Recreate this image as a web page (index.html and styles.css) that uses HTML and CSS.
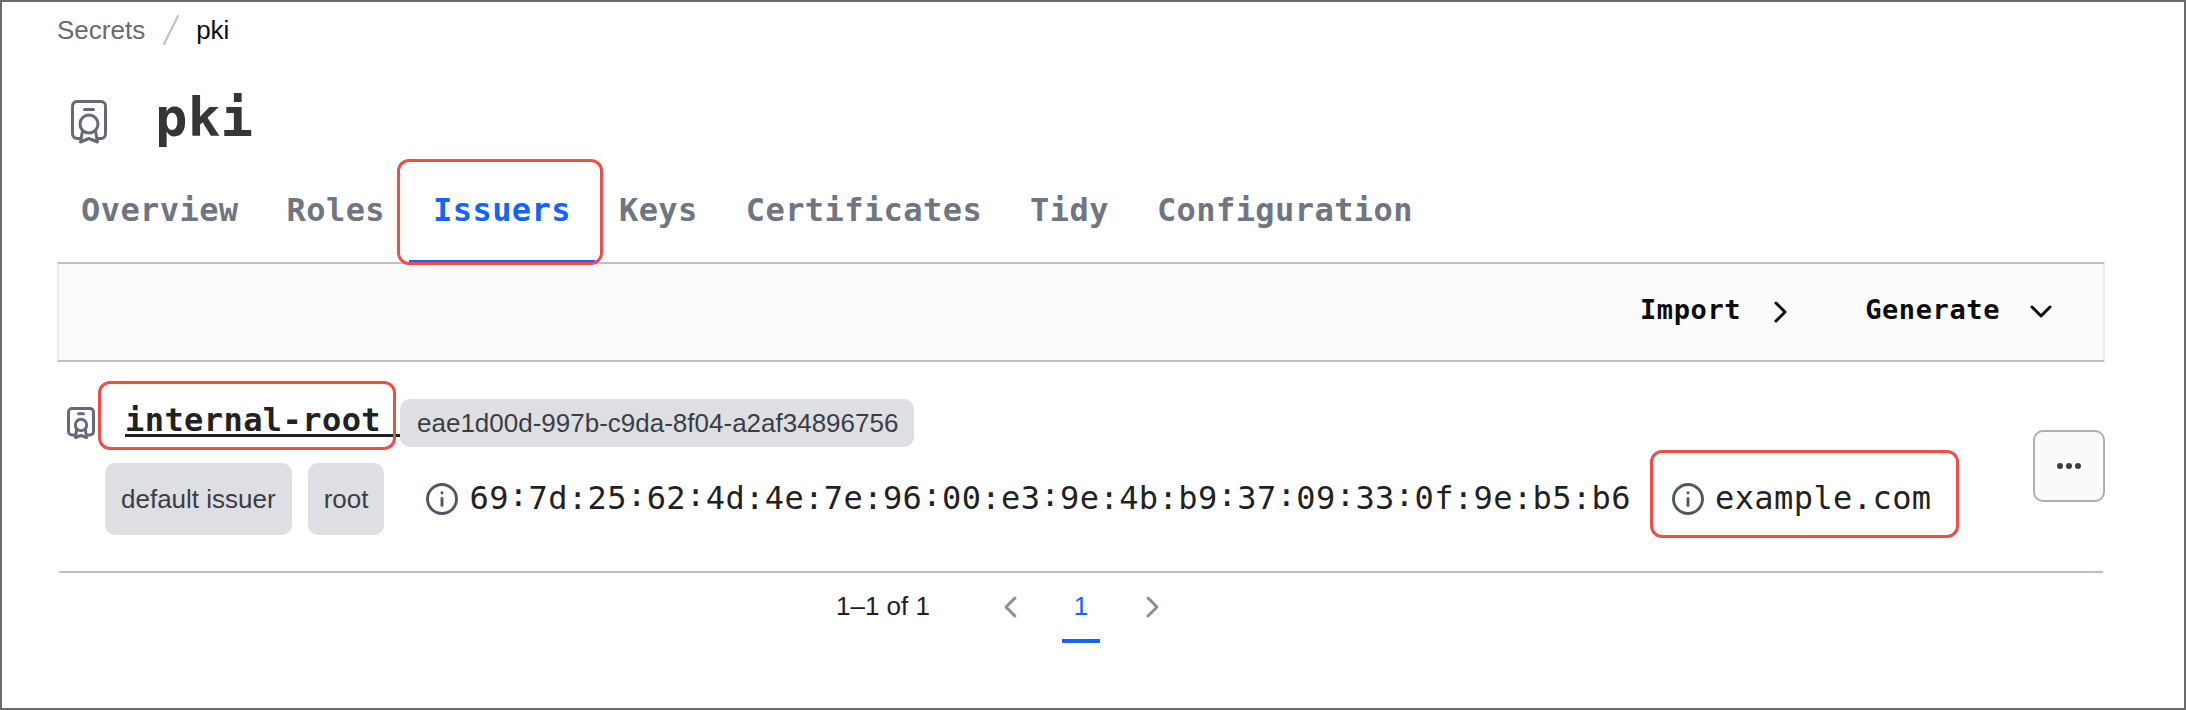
FILE: index.html
```html
<!DOCTYPE html>
<html lang="en">
<head>
<meta charset="utf-8">
<title>pki issuers</title>
<link rel="stylesheet" href="styles.css">
</head>
<body>
<svg class="defs" width="0" height="0">
  <symbol id="cert" viewBox="0 0 36 44">
    <path d="M9 38.500H6a4.500 4.500 0 0 1-4.500-4.500V6A4.500 4.500 0 0 1 6 1.500H30A4.500 4.500 0 0 1 34.500 6V34A4.500 4.500 0 0 1 30 38.500H27M13.500 9.500H22.500"/>
    <circle cx="18" cy="24" r="9"/>
    <path d="M11.500 31L9.500 42L18 38.500L26.500 42L24.500 31"/>
  </symbol>
  <symbol id="cert-small" viewBox="0 0 28 32">
    <path d="M7 28H5a3.500 3.500 0 0 1-3.500-3.500V5A3.500 3.500 0 0 1 5 1.500H23A3.500 3.500 0 0 1 26.500 5V24.500A3.500 3.500 0 0 1 23 28H21M11.500 6.700H16.500"/>
    <circle cx="14" cy="18" r="5.700"/>
    <path d="M9.500 23L8.500 30.500L14 28.500L19.500 30.500L18.500 23"/>
  </symbol>
  <symbol id="info" viewBox="0 0 32 32">
    <circle cx="16" cy="16" r="14.500"/>
    <path d="M16 15.500V22.500M16 9.700V10"/>
  </symbol>
</svg>
<main class="page">
  <nav class="crumbs">
    <a>Secrets</a>
    <svg class="slash" width="18" height="32"><path d="M16 2L2 30"/></svg>
    <span class="current">pki</span>
  </nav>
  <header class="title">
    <svg class="icon cert-lg"><use href="#cert"/></svg>
    <h1>pki</h1>
  </header>
  <nav class="tabs">
    <a>Overview</a><a>Roles</a><a class="active">Issuers<i class="mark mark-tab"></i></a><a>Keys</a><a>Certificates</a><a>Tidy</a><a>Configuration</a>
  </nav>
  <section class="toolbar">
    <a>Import</a>
    <svg class="chev import" width="16" height="24"><path d="M3 3L12 12L3 21"/></svg>
    <a>Generate</a>
    <svg class="chev" width="24" height="16"><path d="M3 3L12 12L21 3"/></svg>
  </section>
  <section class="row">
    <div class="details">
      <div class="line first">
        <svg class="icon cert-sm"><use href="#cert-small"/></svg>
        <a class="name">internal-root<i class="mark mark-name"></i></a>
        <span class="badge id">eae1d00d-997b-c9da-8f04-a2af34896756</span>
      </div>
      <div class="line second">
        <span class="badge tag">default issuer</span>
        <span class="badge tag">root</span>
        <svg class="icon info info-serial"><use href="#info"/></svg>
        <span class="mono serial">69<b>:</b>7d:25<b>:</b>62<b>:</b>4d:4e:7e:96<b>:</b>00:e3<b>:</b>9e:4b:b9<b>:</b>37<b>:</b>09<b>:</b>33<b>:</b>0f:9e:b5:b6</span>
        <span class="cn"><svg class="icon info"><use href="#info"/></svg><span class="mono">example.com</span><i class="mark mark-cn"></i></span>
      </div>
    </div>
    <button class="more" aria-label="More"><svg width="24" height="6"><circle cx="3" cy="3" r="3"/><circle cx="12" cy="3" r="3"/><circle cx="21" cy="3" r="3"/></svg></button>
  </section>
  <footer class="pager">
    <span class="count">1–1 of 1</span>
    <svg class="chev muted" width="16" height="24"><path d="M13 3L4 12L13 21"/></svg>
    <span class="num">1</span>
    <svg class="chev muted" width="16" height="24"><path d="M3 3L12 12L3 21"/></svg>
  </footer>
</main>
</body>
</html>
```
FILE: styles.css
```css
* { box-sizing: border-box; }
body { margin: 0; background: #fff; font-family: "Liberation Sans", Arial, sans-serif; font-size: 26px; color: #1f2124; }
.defs { position: absolute; }
svg { display: block; flex: none; fill: none; stroke-linecap: round; stroke-linejoin: round; }
.page { height: 710px; border: 2px solid #6b6b6c; padding: 0 79px 0 55px; display: flex; flex-direction: column; }

.crumbs { display: flex; align-items: center; height: 56px; line-height: 30px; color: #656a76; }
.slash { margin: 0 16px 0 17px; stroke: #c2c5cb; stroke-width: 2.5; }
.crumbs .current { color: #0c0c0e; }

.icon { stroke: #656a76; }
.title { display: flex; align-items: center; height: 128px; padding-left: 14px; }
.cert-lg { width: 36px; height: 44px; stroke-width: 3; }
.title h1 { margin: 0 0 9px 48px; font: bold 54px/60px "DejaVu Sans Mono", monospace; letter-spacing: .3px; color: #363636; }

.tabs { display: flex; height: 76px; font: bold 32px/48px "DejaVu Sans Mono", monospace; letter-spacing: .43px; color: #6f7682; }
.tabs a { position: relative; padding: 0 24px; height: 76px; }
.tabs .active { color: #1563ff; border-bottom: 2px solid #1563ff; }

.toolbar { display: flex; align-items: center; justify-content: flex-end; height: 100px; flex: none; border: 2px solid #bac1cc; border-left-color: #ebeef2; border-right-color: #ebeef2; background: #fbfbfb; padding-right: 50px; font: bold 27px/40px "DejaVu Sans Mono", monospace; letter-spacing: .6px; color: #0c0c0e; }
.toolbar a { margin-bottom: 5px; }
.chev { stroke: #0c0c0e; stroke-width: 3; }
.toolbar .chev { margin-left: 29px; }
.toolbar .import { margin: 0 76px 0 32px; }

.row { display: flex; height: 211px; margin: 0 2px; border-bottom: 2px solid #bac1cc; }
.details { flex: 1; padding-top: 37px; }
.line { display: flex; align-items: center; }
.first { height: 48px; padding-left: 8px; }
.cert-sm { width: 28px; height: 32px; stroke-width: 3; }
.name { position: relative; flex: none; margin-left: 30px; width: 275px; height: 38px; margin-bottom: 10px; font: bold 32px/42px "DejaVu Sans Mono", monospace; letter-spacing: .43px; border-bottom: 3px solid #1f2124; white-space: nowrap; }
.badge { display: flex; align-items: center; background: #dedfe3; color: #3b3d45; border-radius: 10px; padding: 0 16px; white-space: nowrap; }
.id { height: 48px; width: 514px; padding-left: 17px; }
.second { height: 72px; margin-top: 16px; padding-left: 46px; }
.tag { height: 72px; margin-right: 16px; }
.info { width: 32px; height: 32px; stroke: #525761; stroke-width: 2.9; }
.info-serial { margin-left: 26px; }
.mono { font: 32px/40px "DejaVu Sans Mono", monospace; letter-spacing: .42px; margin: 0 0 3px 11px; white-space: nowrap; }
.mono b { font-weight: 400; position: relative; top: -3px; }
.cn { position: relative; display: flex; align-items: center; margin-left: 41px; }
.more { width: 72px; height: 72px; margin: 68px -2px 0 0; padding: 0; border: 2px solid #b0b0b6; border-radius: 10px; background: #fafafa; display: flex; align-items: center; justify-content: center; }
.more svg { fill: #3b3d45; }

.pager { display: flex; align-items: center; height: 70px; padding-left: 779px; line-height: 30px; }
.count { margin: 0 72px 4px 0; }
.muted { stroke: #8c909c; margin-bottom: 2px; }
.num { align-self: stretch; width: 38px; margin: 0 45px 0 44px; text-align: center; color: #1563ff; line-height: 66px; border-bottom: 4px solid #1563ff; border-radius: 1px; }

/* Highlight frames around the tab, the issuer name and the common name */
.mark { position: absolute; border: 3px solid #ee4e4b; border-radius: 12px; }
.mark-tab { left: -12px; right: -8px; top: -27px; height: 106px; }
.mark-name { left: -27px; width: 298px; top: -18px; height: 69px; }
.mark-cn { left: -22px; width: 309px; top: -28px; height: 88px; }
```
